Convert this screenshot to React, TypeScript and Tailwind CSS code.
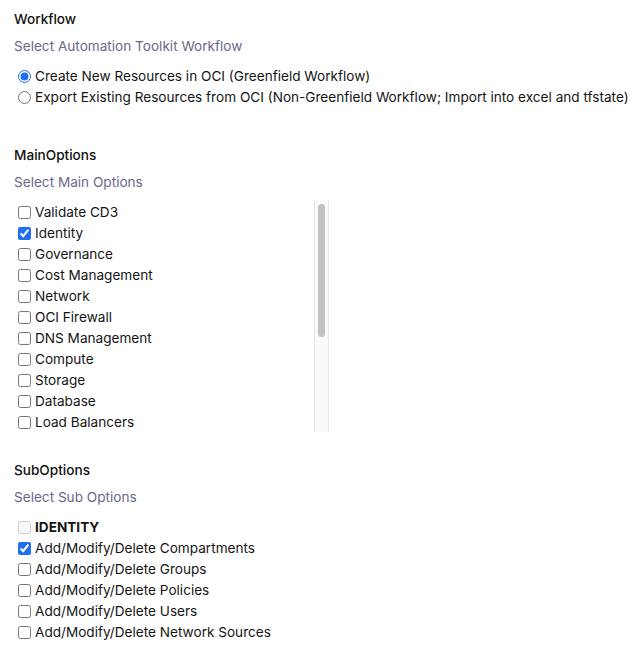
import React from "react";

const mainOptions = [
  "Validate CD3",
  "Identity",
  "Governance",
  "Cost Management",
  "Network",
  "OCI Firewall",
  "DNS Management",
  "Compute",
  "Storage",
  "Database",
  "Load Balancers",
  "Management Services",
  "Developer Services",
  "Logging Services",
  "Software-Defined Data Centers - OCVS",
  "Security",
  "CD3 Services",
];

const subOptions = [
  "Add/Modify/Delete Compartments",
  "Add/Modify/Delete Groups",
  "Add/Modify/Delete Policies",
  "Add/Modify/Delete Users",
  "Add/Modify/Delete Network Sources",
];

function Heading({ children }: { children: React.ReactNode }) {
  return <div className="h-5 leading-5 font-medium text-[#111111]">{children}</div>;
}

function Sub({ children }: { children: React.ReactNode }) {
  return <div className="h-5 leading-5 text-[#6c6888]">{children}</div>;
}

const box = "ml-[4px] mr-[4px] w-[13px] h-[13px] shrink-0 accent-[#1f6ff2]";

export default function App() {
  return (
    <div
      className="w-[644px] h-[654px] bg-white pl-[14px] pt-[9px] text-[13.6px] text-[#151515]"
      style={{ fontFamily: "Inter, 'Noto Sans', sans-serif" }}
    >
      <Heading>Workflow</Heading>
      <div className="mt-[7px]">
        <Sub>Select Automation Toolkit Workflow</Sub>
      </div>
      <div className="mt-[10px] flex flex-col">
        <label className="flex items-center h-[21px] whitespace-nowrap">
          <input type="radio" name="wf" defaultChecked className={box} />
          <span>Create New Resources in OCI (Greenfield Workflow)</span>
        </label>
        <label className="flex items-center h-[21px] whitespace-nowrap">
          <input type="radio" name="wf" className={box} />
          <span>Export Existing Resources from OCI (Non-Greenfield Workflow; Import into excel and tfstate)</span>
        </label>
      </div>

      <div className="mt-[37px]">
        <Heading>MainOptions</Heading>
      </div>
      <div className="mt-[7px]">
        <Sub>Select Main Options</Sub>
      </div>
      <div className="mt-[9px] w-[315px] h-[231px] flex">
        <div className="flex-1 overflow-hidden pt-px">
          {mainOptions.map((o, i) => (
            <label key={o} className="flex items-center h-[21px] whitespace-nowrap">
              <input type="checkbox" defaultChecked={i === 1} className={box} />
              <span>{o}</span>
            </label>
          ))}
        </div>
        <div className="w-[15px] h-full bg-[#fafafa] border-l border-r border-[#e6e6e6] pt-[3px] px-[3px]">
          <div className="h-[133px] rounded-full bg-[#c1c1c1]" />
        </div>
      </div>

      <div className="mt-[28px]">
        <Heading>SubOptions</Heading>
      </div>
      <div className="mt-[7px]">
        <Sub>Select Sub Options</Sub>
      </div>
      <div className="mt-[9px] flex flex-col">
        <label className="flex items-center h-[22px] whitespace-nowrap">
          <input type="checkbox" disabled className={box} />
          <span className="font-bold">IDENTITY</span>
        </label>
        {subOptions.map((o, i) => (
          <label key={o} className="flex items-center h-[21px] whitespace-nowrap">
            <input type="checkbox" defaultChecked={i === 0} className={box} />
            <span>{o}</span>
          </label>
        ))}
      </div>
    </div>
  );
}
